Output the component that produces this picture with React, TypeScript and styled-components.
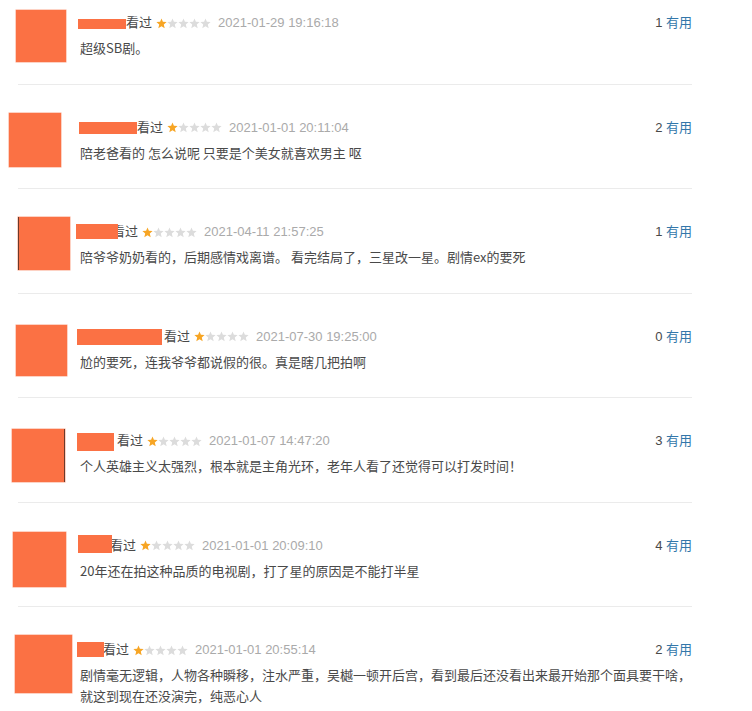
import React from "react";
import styled, { createGlobalStyle } from "styled-components";

const GlobalStyle = createGlobalStyle`
  html, body { margin: 0; padding: 0; background: #fff; }
  body {
    font-family: "Liberation Sans", Arial, "Noto Sans CJK SC", sans-serif;
    font-size: 13px;
    color: #494949;
  }
`;

const List = styled.div`
  margin-left: 18px;
  width: 674px;
`;

const Item = styled.div`
  display: flex;
  align-items: flex-start;
  padding: 33px 0 25.5px;
  border-bottom: 1px solid #ebebeb;
  &:first-child { padding-top: 13px; }
`;

const AvatarSlot = styled.div`
  position: relative;
  width: 48px;
  height: 40px;
  flex-shrink: 0;
  margin-right: 12px;
`;

const Redact = styled.div<{ $x: number; $y: number; $w: number; $h: number; $edge?: string }>`
  position: absolute;
  left: ${(p) => p.$x}px;
  top: ${(p) => p.$y}px;
  width: ${(p) => p.$w}px;
  height: ${(p) => p.$h}px;
  background: #fb7144;
  box-shadow: 0 0 0 0.5px #fca58a;
  ${(p) => (p.$edge ? `border-${p.$edge}: 1px solid #6b3a2c;` : "")}
  box-sizing: border-box;
`;

const Content = styled.div`
  flex: 1;
  min-width: 0;
`;

const Header = styled.div`
  display: flex;
  align-items: center;
  height: 20px;
  line-height: 20px;
`;

const NameMask = styled.span<{ $w: number; $h: number; $y: number; $ml: number; $mr: number }>`
  align-self: flex-start;
  position: relative;
  z-index: 1;
  width: ${(p) => p.$w}px;
  height: ${(p) => p.$h}px;
  margin-top: ${(p) => p.$y}px;
  margin-left: ${(p) => p.$ml}px;
  margin-right: ${(p) => p.$mr}px;
  background: #fb7144;
  flex-shrink: 0;
`;

const Watched = styled.span`
  color: #494949;
`;

const Stars = styled.span`
  display: inline-flex;
  margin-left: 4px;
`;

const Date = styled.span`
  margin-left: 7px;
  color: #aaa;
`;

const Votes = styled.span`
  margin-left: auto;
  color: #494949;
`;

const Useful = styled.span`
  color: #3377aa;
`;

const Body = styled.p`
  margin: 4px 0 0;
  padding-left: 2px;
  font-family: "Noto Sans CJK SC", "Liberation Sans", sans-serif;
  line-height: 21px;
  color: #494949;
`;

const Star = ({ on }: { on: boolean }) => (
  <svg width="11" height="11" viewBox="0 0 11 11">
    <polygon
      points="5.5,0.4 6.9,3.8 10.6,4.1 7.8,6.5 8.7,10.2 5.5,8.2 2.3,10.2 3.2,6.5 0.4,4.1 4.1,3.8"
      fill={on ? "#f7a524" : "#dcdcdc"}
    />
  </svg>
);

type Row = {
  av: [number, number, number, number];
  edge?: string;
  name: [number, number, number, number, number];
  date: string;
  votes: number;
  text: string;
};

const rows: Row[] = [
  { av: [-2, -3, 50, 52], name: [48, 10, 6, 0, 0], date: "2021-01-29 19:16:18", votes: 1, text: "超级SB剧。" },
  { av: [-9, -5, 52, 54], name: [58, 12, 4, 1, 0], date: "2021-01-01 20:11:04", votes: 2, text: "陪老爸看的 怎么说呢 只要是个美女就喜欢男主 呕" },
  { av: [0, -5, 52, 53], edge: "left", name: [42, 15, 2, -2, -6], date: "2021-04-11 21:57:25", votes: 1, text: "陪爷爷奶奶看的，后期感情戏离谱。 看完结局了，三星改一星。剧情ex的要死" },
  { av: [-2, -2, 51, 51], name: [85, 16, 2, -1, 2], date: "2021-07-30 19:25:00", votes: 0, text: "尬的要死，连我爷爷都说假的很。真是瞎几把拍啊" },
  { av: [-6, -2, 53, 53], edge: "right", name: [37, 18, 2, -1, 3], date: "2021-01-07 14:47:20", votes: 3, text: "个人英雄主义太强烈，根本就是主角光环，老年人看了还觉得可以打发时间！" },
  { av: [-5, -4, 53, 55], name: [34, 18, -1, 0, -2], date: "2021-01-01 20:09:10", votes: 4, text: "20年还在拍这种品质的电视剧，打了星的原因是不能打半星" },
  { av: [-3, -5, 57, 58], name: [27, 15, 2, -1, -1], date: "2021-01-01 20:55:14", votes: 2, text: "剧情毫无逻辑，人物各种瞬移，注水严重，吴樾一顿开后宫，看到最后还没看出来最开始那个面具要干啥，就这到现在还没演完，纯恶心人" },
];

export default function App() {
  return (
    <>
      <GlobalStyle />
      <List>
        {rows.map((r, i) => (
          <Item key={i}>
            <AvatarSlot>
              <Redact $x={r.av[0]} $y={r.av[1]} $w={r.av[2]} $h={r.av[3]} $edge={r.edge} />
            </AvatarSlot>
            <Content>
              <Header>
                <NameMask $w={r.name[0]} $h={r.name[1]} $y={r.name[2]} $ml={r.name[3]} $mr={r.name[4]} />
                <Watched>看过</Watched>
                <Stars>
                  {[0, 1, 2, 3, 4].map((s) => (
                    <Star key={s} on={s === 0} />
                  ))}
                </Stars>
                <Date>{r.date}</Date>
                <Votes>
                  {r.votes} <Useful>有用</Useful>
                </Votes>
              </Header>
              <Body>{r.text}</Body>
            </Content>
          </Item>
        ))}
      </List>
    </>
  );
}
